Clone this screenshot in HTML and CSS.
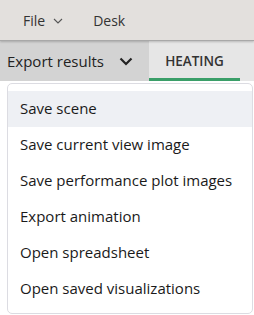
FILE: index.html
```html
<!DOCTYPE html>
<html>
<head>
<meta charset="utf-8">
<link rel="stylesheet" href="styles.css">
</head>
<body>
<div class="topbar">
  <span class="top-item">File <svg class="chev-sm" width="10" height="6" viewBox="0 0 10 6"><path d="M1 1 L5 5 L9 1" fill="none" stroke="#555" stroke-width="1.1"/></svg></span>
  <span class="top-item desk">Desk</span>
</div>
<div class="toolbar">
  <div class="export">Export results <svg class="chev" width="14" height="9" viewBox="0 0 14 9"><path d="M1.5 1.5 L7 7 L12.5 1.5" fill="none" stroke="#222" stroke-width="2.2"/></svg></div>
  <div class="tab"><span>HEATING</span></div>
</div>
<div class="menu">
  <div class="item active">Save scene</div>
  <div class="item">Save current view image</div>
  <div class="item">Save performance plot images</div>
  <div class="item">Export animation</div>
  <div class="item">Open spreadsheet</div>
  <div class="item">Open saved visualizations</div>
</div>
</body>
</html>
```
FILE: styles.css
```css
* { box-sizing: border-box; }
html, body { margin: 0; padding: 0; }
body {
  width: 254px;
  height: 315px;
  background: #ffffff;
  font-family: "Open Sans", "Noto Sans", sans-serif;
  color: #222;
  overflow: hidden;
}
.topbar {
  height: 41px;
  background: #e3e0dd;
  display: flex;
  align-items: center;
  padding-left: 23px;
  padding-top: 1px;
  font-size: 14px;
  color: #333;
  border-bottom: 1px solid #a8a8a8;
  box-shadow: 0 1px 2px rgba(0,0,0,0.2);
  position: relative;
  z-index: 1;
}
.top-item { display: flex; align-items: center; gap: 8px; }
.desk { margin-left: 30px; }
.toolbar {
  height: 40px;
  display: flex;
}
.export {
  width: 149px;
  background: #d3d3d3;
  display: flex;
  align-items: center;
  padding-left: 7px;
  font-size: 15px;
  color: #222;
  gap: 15px;
}
.tab {
  flex: 1;
  background: #e6e6e6;
  display: flex;
  align-items: stretch;
}
.tab span {
  width: 91px;
  display: flex;
  align-items: center;
  justify-content: center;
  font-size: 13.5px;
  font-weight: 600;
  color: #333;
  border-bottom: 3px solid #3a9e68;
  padding-top: 3px;
}
.menu {
  margin: 2px 1px 0 7px;
  border: 1px solid #dcdce2;
  border-radius: 5px;
  padding: 7px 0 6px 0;
  background: #fff;
}
.item {
  height: 36px;
  display: flex;
  align-items: center;
  padding-left: 12px;
  padding-bottom: 3px;
  font-size: 15px;
  color: #1a1a1a;
}
.item.active { background: #eef0f4; }
```
